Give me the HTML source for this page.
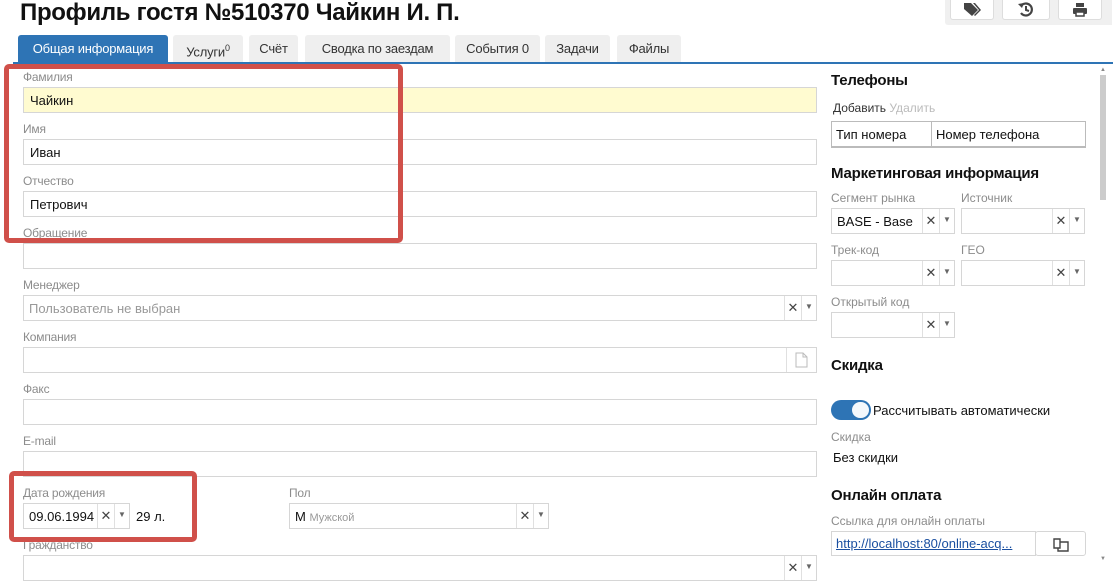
<!DOCTYPE html>
<html><head><meta charset="utf-8"><style>
*{box-sizing:border-box;margin:0;padding:0}
body{width:1113px;height:569px;overflow:hidden;background:#fff;font-family:"Liberation Sans","DejaVu Sans",sans-serif;font-size:13px;color:#111;position:relative}
.a{position:absolute}
.lbl{position:absolute;left:23px;font-size:12px;color:#8c8c8c;letter-spacing:-0.2px}
.inp{position:absolute;left:23px;width:794px;height:26px;border:1px solid #d6d6d6;background:#fff;padding:5px 6px;font-size:13px}
.tab{position:absolute;top:35px;height:27px;background:#efefef;border-radius:3px 3px 0 0;font-size:13px;color:#333;text-align:center;line-height:27px;letter-spacing:-0.2px}
.sel{position:absolute;height:26px;border:1px solid #d6d6d6;background:#fff;font-size:13px;padding:5px 5px}
.sel .x{position:absolute;top:0;width:17px;height:24px;border-left:1px solid #e0e0e0;text-align:center;line-height:24px;font-size:13px;color:#444}
.sel .d{position:absolute;top:0;right:0;width:15px;height:24px;border-left:1px solid #e0e0e0;text-align:center;line-height:22px;font-size:8px;color:#666}
.h{position:absolute;left:831px;font-size:15px;font-weight:bold;color:#111;letter-spacing:-0.2px}
.rl{position:absolute;font-size:12px;color:#8c8c8c}
.red{position:absolute;border:5px solid #d0504a;border-radius:5px}
</style></head><body>
<div class="a" style="left:20px;top:-1px;font-size:24px;font-weight:bold;color:#111;letter-spacing:-0.3px">Профиль гостя №510370 Чайкин И. П.</div>

<div class="a" style="left:945px;top:0;width:167px;height:25px;background:#f0f0f0;border-radius:0 0 0 3px"></div>
<div class="a" style="left:950px;top:0;width:44px;height:20px;background:#fff;border:1px solid #ddd;border-top:none;border-radius:0 0 3px 3px"></div>
<div class="a" style="left:1002px;top:0;width:48px;height:20px;background:#fff;border:1px solid #ddd;border-top:none;border-radius:0 0 3px 3px"></div>
<div class="a" style="left:1058px;top:0;width:44px;height:20px;background:#fff;border:1px solid #ddd;border-top:none;border-radius:0 0 3px 3px"></div>
<svg class="a" style="left:963px;top:2px" width="18" height="15" viewBox="0 0 18 15"><path d="M1 1h7l7 7-6 6-8-7z" fill="#444"/><path d="M10 1h2l6 7-6 6-1-1 5-5z" fill="#444"/></svg>
<svg class="a" style="left:1018px;top:2px" width="16" height="15" viewBox="0 0 16 15"><path d="M3 4a6 6 0 1 1 0 7" stroke="#444" stroke-width="2.2" fill="none"/><path d="M0 2l4 4 2-5z" fill="#444"/><path d="M8 4v4l3 1" stroke="#444" stroke-width="2" fill="none"/></svg>
<svg class="a" style="left:1072px;top:3px" width="16" height="14" viewBox="0 0 16 14"><rect x="4" y="0" width="8" height="4" fill="#444"/><rect x="1" y="5" width="14" height="6" rx="1" fill="#444"/><rect x="4" y="9" width="8" height="4" fill="#fff" stroke="#444" stroke-width="1.5"/></svg>

<div class="tab" style="left:18px;width:150px;background:#2e74b5;color:#fff">Общая информация</div>
<div class="tab" style="left:173px;width:70px">Услуги<sup style="font-size:9px">0</sup></div>
<div class="tab" style="left:249px;width:49px">Счёт</div>
<div class="tab" style="left:305px;width:145px">Сводка по заездам</div>
<div class="tab" style="left:455px;width:85px">События 0</div>
<div class="tab" style="left:545px;width:65px">Задачи</div>
<div class="tab" style="left:617px;width:64px">Файлы</div>
<div class="a" style="left:13px;top:62px;width:1100px;height:2px;background:#2e74b5"></div>

<div class="lbl" style="top:70px">Фамилия</div><div class="inp" style="top:87px;background:#fffbd0">Чайкин</div>
<div class="lbl" style="top:122px">Имя</div><div class="inp" style="top:139px">Иван</div>
<div class="lbl" style="top:174px">Отчество</div><div class="inp" style="top:191px">Петрович</div>
<div class="lbl" style="top:226px">Обращение</div><div class="inp" style="top:243px"></div>
<div class="lbl" style="top:278px">Менеджер</div>
<div class="sel" style="left:23px;top:295px;width:794px;color:#999">Пользователь не выбран<span class="x" style="right:15px">✕</span><span class="d">▼</span></div>
<div class="lbl" style="top:330px">Компания</div>
<div class="inp" style="top:347px"><span class="a" style="right:0;top:0;width:30px;height:24px;border-left:1px solid #e0e0e0"><svg style="position:absolute;left:8px;top:4px" width="13" height="16" viewBox="0 0 13 16"><path d="M1 1h7l4 4v10H1z M8 1v4h4" fill="none" stroke="#bbb"/></svg></span></div>
<div class="lbl" style="top:382px">Факс</div><div class="inp" style="top:399px"></div>
<div class="lbl" style="top:434px">E-mail</div><div class="inp" style="top:451px"></div>
<div class="lbl" style="top:486px">Дата рождения</div>
<div class="sel" style="left:23px;top:503px;width:107px">09.06.1994<span class="x" style="right:15px">✕</span><span class="d">▼</span></div>
<div class="a" style="left:136px;top:509px;font-size:13px">29 л.</div>
<div class="lbl" style="left:289px;top:486px">Пол</div>
<div class="sel" style="left:289px;top:503px;width:260px">М <span style="font-size:11px;color:#999">Мужской</span><span class="x" style="right:15px">✕</span><span class="d">▼</span></div>
<div class="lbl" style="top:538px">Гражданство</div>
<div class="sel" style="left:23px;top:555px;width:794px"><span class="x" style="right:15px">✕</span><span class="d">▼</span></div>

<div class="red" style="left:4px;top:64px;width:399px;height:179px"></div>
<div class="red" style="left:9px;top:471px;width:188px;height:71px"></div>

<div class="h" style="top:72px">Телефоны</div>
<div class="a" style="left:833px;top:101px;font-size:12px;color:#333">Добавить <span style="color:#bbb">Удалить</span></div>
<div class="a" style="left:831px;top:121px;width:255px;height:27px;border:1px solid #bbb;border-bottom-width:2px"></div>
<div class="a" style="left:931px;top:121px;width:1px;height:27px;background:#bbb"></div>
<div class="a" style="left:836px;top:127px;font-size:13px">Тип номера</div>
<div class="a" style="left:936px;top:127px;font-size:13px">Номер телефона</div>
<div class="h" style="top:165px">Маркетинговая информация</div>
<div class="rl" style="left:831px;top:191px">Сегмент рынка</div>
<div class="rl" style="left:961px;top:191px">Источник</div>
<div class="sel" style="left:831px;top:208px;width:124px">BASE - Base<span class="x" style="right:15px">✕</span><span class="d">▼</span></div>
<div class="sel" style="left:961px;top:208px;width:124px"><span class="x" style="right:15px">✕</span><span class="d">▼</span></div>
<div class="rl" style="left:831px;top:243px">Трек-код</div>
<div class="rl" style="left:961px;top:243px">ГЕО</div>
<div class="sel" style="left:831px;top:260px;width:124px"><span class="x" style="right:15px">✕</span><span class="d">▼</span></div>
<div class="sel" style="left:961px;top:260px;width:124px"><span class="x" style="right:15px">✕</span><span class="d">▼</span></div>
<div class="rl" style="left:831px;top:295px">Открытый код</div>
<div class="sel" style="left:831px;top:312px;width:124px"><span class="x" style="right:15px">✕</span><span class="d">▼</span></div>
<div class="h" style="top:357px">Скидка</div>
<div class="a" style="left:831px;top:400px;width:40px;height:20px;border-radius:10px;background:#2e74b5"></div>
<div class="a" style="left:852px;top:402px;width:17px;height:16px;border-radius:8px;background:#f4f8fc"></div>
<div class="a" style="left:873px;top:403px;font-size:13px">Рассчитывать автоматически</div>
<div class="rl" style="left:831px;top:430px">Скидка</div>
<div class="a" style="left:833px;top:450px;font-size:13px">Без скидки</div>
<div class="h" style="top:487px">Онлайн оплата</div>
<div class="rl" style="left:831px;top:514px">Ссылка для онлайн оплаты</div>
<div class="a" style="left:831px;top:531px;width:205px;height:25px;border:1px solid #d6d6d6;padding:4px 4px;font-size:13px;color:#1a4fa0;text-decoration:underline;white-space:nowrap;overflow:hidden">http://localhost:80/online-acq...</div>
<div class="a" style="left:1035px;top:531px;width:51px;height:25px;border:1px solid #d6d6d6;border-radius:3px"><svg style="position:absolute;left:17px;top:4px" width="17" height="16" viewBox="0 0 17 16"><path d="M1 3h6v9H1z M7 6h8v9H5v-3" fill="none" stroke="#444" stroke-width="1.4"/></svg></div>

<div class="a" style="left:1100px;top:75px;width:6px;height:125px;background:#ccc"></div>
<div class="a" style="left:1100px;top:67px;font-size:6px;color:#888">▲</div>
<div class="a" style="left:1100px;top:556px;font-size:6px;color:#888">▼</div>
</body></html>
